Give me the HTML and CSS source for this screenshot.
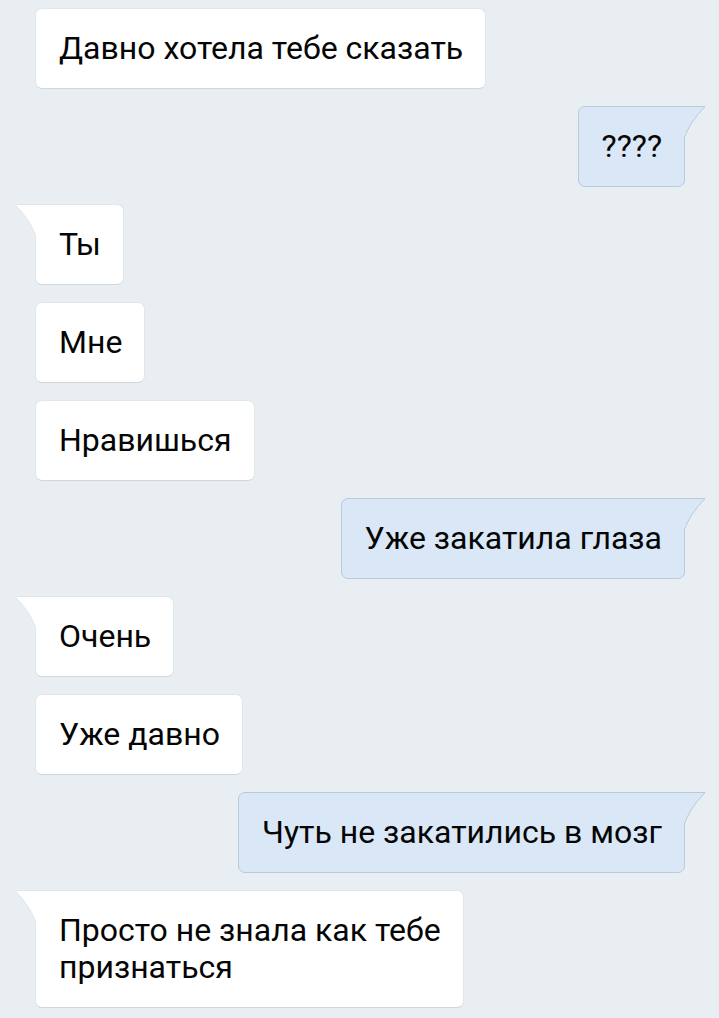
FILE: index.html
```html
<!DOCTYPE html>
<html lang="ru">
<head>
  <meta charset="UTF-8">
  <title>Диалог</title>
  <link rel="stylesheet" href="styles.css">
</head>
<body>
  <div class="chat">
    <div class="msg in">Давно хотела тебе сказать</div>
    <div class="msg out tail">
      <svg class="tip" width="22" height="34" viewBox="0 0 22 34"><path d="M0 33 Q5 17 21 0.5 L0 0.5" /></svg>
      ????
    </div>
    <div class="msg in tail">
      <svg class="tip" width="22" height="34" viewBox="0 0 22 34"><path d="M22 33 Q17 17 1 0.5 L22 0.5" /></svg>
      Ты
    </div>
    <div class="msg in">Мне</div>
    <div class="msg in">Нравишься</div>
    <div class="msg out tail">
      <svg class="tip" width="22" height="34" viewBox="0 0 22 34"><path d="M0 33 Q5 17 21 0.5 L0 0.5" /></svg>
      Уже закатила глаза
    </div>
    <div class="msg in tail">
      <svg class="tip" width="22" height="34" viewBox="0 0 22 34"><path d="M22 33 Q17 17 1 0.5 L22 0.5" /></svg>
      Очень
    </div>
    <div class="msg in">Уже давно</div>
    <div class="msg out tail">
      <svg class="tip" width="22" height="34" viewBox="0 0 22 34"><path d="M0 33 Q5 17 21 0.5 L0 0.5" /></svg>
      Чуть не закатились в мозг
    </div>
    <div class="msg in tail">
      <svg class="tip" width="22" height="34" viewBox="0 0 22 34"><path d="M22 33 Q17 17 1 0.5 L22 0.5" /></svg>
      Просто не знала как тебе<br>признаться
    </div>
  </div>
</body>
</html>
```

FILE: styles.css
```css
body {
  margin: 0;
  background-color: #e8eef1;
  font-family: Roboto, 'Noto Sans', sans-serif;
}
.chat {
  display: flex;
  flex-direction: column;
  gap: 17px;
  padding: 8px 34px 0 35px;
}
.msg {
  position: relative;
  font-size: 32px;
  line-height: 37px;
  color: #050505;
  padding: 21px 22px 21px 23px;
  border-radius: 7px;
  border: 1px solid transparent;
}
.in {
  align-self: flex-start;
  background-color: #fff;
  border-color: #e0e6e9;
  border-bottom-color: #d0d7db;
}
.out {
  align-self: flex-end;
  background-color: #d9e7f6;
  border-color: #b9cadb;
}
.in.tail {
  border-top-left-radius: 0;
}
.out.tail {
  border-top-right-radius: 0;
}
.tip {
  position: absolute;
  top: -1px;
}
.in .tip {
  left: -22px;
}
.out .tip {
  right: -22px;
}
.in .tip path {
  fill: #fff;
  stroke: #e0e6e9;
  stroke-width: 1;
}
.out .tip path {
  fill: #d9e7f6;
  stroke: #b9cadb;
  stroke-width: 1;
}
```
